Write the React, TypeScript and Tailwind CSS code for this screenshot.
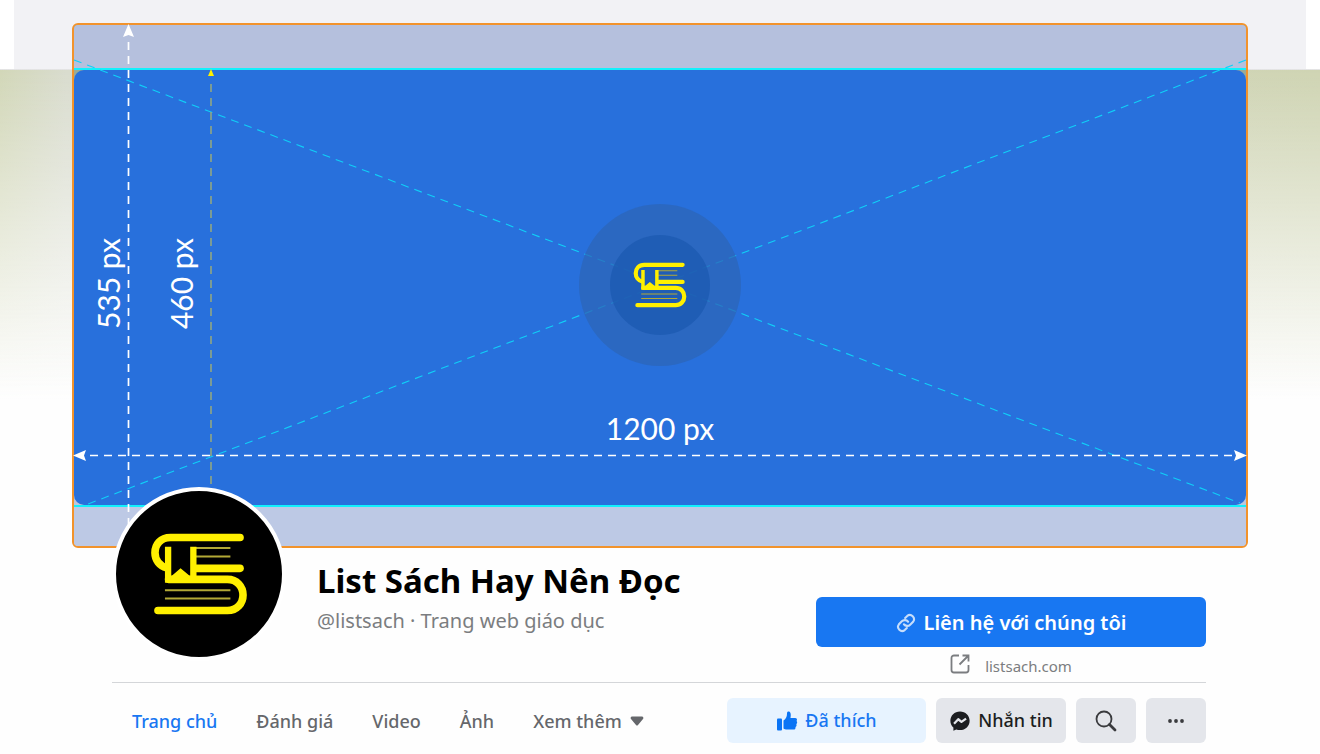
import React from 'react';

const tabs = ['Đánh giá', 'Video', 'Ảnh'];

const BookLogo: React.FC<{ className?: string }> = ({ className }) => (
  <svg viewBox="150 155 295 250" className={className} fill="none" aria-hidden="true">
    <g stroke="#b3a936" strokeWidth="6">
      <path d="M288 202H392M288 227H392M195 329H392M195 354H392" />
    </g>
    <g stroke="#fff000" strokeWidth="23" strokeLinecap="round">
      <path d="M421 170H212C181 170 165 192 165 216C165 238 179 256 200 261" />
      <path d="M421 263H290" />
      <path d="M206 296H383C412 296 430 318 430 343C430 368 412 390 383 390H174" />
    </g>
    <path d="M195 198H214V287L242 263L271 287V198H290V306H195Z" fill="#fff000" />
  </svg>
);

const Messenger = () => (
  <svg viewBox="0 0 24 24" className="w-[22px] h-[22px]" aria-hidden="true">
    <path
      fill="#1c1e21"
      d="M12 1.5C6 1.5 1.5 5.9 1.5 11.7c0 3 1.2 5.700 3.300 7.500v3.300l3.100-1.200c1.300.4 2.700.6 4.100.6 6 0 10.500-4.400 10.500-10.200S18 1.500 12 1.500Z"
    />
    <path d="m5.500 15 4.600-4.900 3.500 2.800 5-3.500" fill="none" stroke="#e4e6eb" strokeWidth="2.500" strokeLinejoin="round" />
  </svg>
);

const Guides = () => (
  <svg
    viewBox="0 0 1176 525"
    preserveAspectRatio="none"
    className="absolute -inset-[2px] w-[calc(100%+4px)] h-[calc(100%+4px)] pointer-events-none"
    fill="none"
    aria-hidden="true"
  >
    <g stroke="#10d0f8" strokeWidth="1.100" strokeDasharray="8 6">
      <path d="M2 37L1168 480" />
      <path d="M1174 37L16 481" />
    </g>
    <g stroke="#fff" strokeDasharray="8 6">
      <path d="M56.500 19V504" strokeWidth="1.700" />
      <path d="M18 432.500H1164" strokeWidth="1.500" />
    </g>
    <path d="M139 61V468" stroke="#96a97c" strokeWidth="1.500" strokeDasharray="8 6" />
    <g fill="#fff">
      <path d="M56.500 1L62 14L56.500 12L51 14Z" />
      <path d="M1 432.500L14 427L12 432.500L14 438Z" />
      <path d="M1175 432.500L1162 427L1164 432.500L1162 438Z" />
    </g>
    <path d="M139 46L142 53H136Z" fill="#fff000" />
  </svg>
);

const Cover: React.FC = () => (
  <section className="relative mx-[72px] border-2 border-[#f2932c] rounded-[6px] bg-linear-to-b from-[#94a890] to-[#bdc9e5] font-['Lato',sans-serif] text-[30px] leading-[40px] text-white">
    <div className="h-[43px] rounded-t-[4px] bg-[#b5c0dd]" />
    <div className="border-y-2 border-[#12f0fc]">
      <div className="h-[435px] rounded-[10px] bg-[#2870dc]" />
    </div>
    <div className="h-[39px] rounded-b-[4px] bg-[#bdc9e5]" />
    <Guides />
    <div className="absolute left-1/2 top-[260px] -translate-x-1/2 -translate-y-1/2 w-[162px] h-[162px] rounded-full bg-[#2c66b8]/75 flex items-center justify-center">
      <div className="w-[100px] h-[100px] rounded-full bg-[#1c59b0]/75 flex items-center justify-center">
        <BookLogo className="w-[54px] h-[46px]" />
      </div>
    </div>
    <span className="absolute left-[14px] top-[213px] [writing-mode:vertical-rl] rotate-180">535 px</span>
    <span className="absolute left-[87px] top-[213px] [writing-mode:vertical-rl] rotate-180">460 px</span>
    <span className="absolute left-1/2 top-[383px] -translate-x-1/2">1200 px</span>
  </section>
);

export default function App() {
  return (
    <div className="relative min-h-screen bg-[#fefefe] font-['Noto_Sans',sans-serif]">
      <div className="absolute inset-x-0 top-0">
        <div className="h-[69px] bg-white px-[14px]">
          <div className="h-full bg-[#f2f2f5]" />
        </div>
        <div className="h-[330px] bg-linear-to-r from-[#d2d7b8] via-[#d9dcce] via-5% to-[#cfd4b3]">
          <div className="h-full border-t border-black/10 bg-linear-to-b from-white/0 via-white/50 to-[#fefefe]" />
        </div>
      </div>

      <main className="relative pt-[23px]">
        <Cover />

        <div className="ml-[112px] mr-[114px]">
          <header className="flex h-[135px] border-b border-[#d4d6d9]">
            <div className="relative -mt-[61px] w-[174px] h-[174px] shrink-0 rounded-full border-4 border-white bg-black flex items-center justify-center">
              <BookLogo className="w-[98px] h-[84px]" />
            </div>
            <div className="ml-[31px] pt-[11px] grow">
              <h1 className="text-[33px] leading-[44px] font-bold text-black whitespace-nowrap">List Sách Hay Nên Đọc</h1>
              <p className="mt-[4px] text-[20px] leading-[28px] text-[#7b7d80]">@listsach · Trang web giáo dục</p>
            </div>
            <div className="w-[390px] pt-[49px] shrink-0">
              <button className="w-full h-[50px] pt-[2px] rounded-[6px] bg-[#1877f2] text-white text-[20px] font-semibold flex items-center justify-center gap-[8px]">
                <svg viewBox="0 0 24 24" className="w-[20px] h-[20px] opacity-75" fill="none" stroke="currentColor" strokeWidth="2.500" strokeLinecap="round" aria-hidden="true">
                  <path d="M9.500 13.500a5 5 0 0 0 7.500.5l3.500-3.500a5 5 0 0 0-7-7L11 6" />
                  <path d="M14.500 10.500a5 5 0 0 0-7.500-.5l-3.500 3.500a5 5 0 0 0 7 7L13 18" />
                </svg>
                Liên hệ với chúng tôi
              </button>
              <a href="#" className="mt-[7px] flex items-center justify-center gap-[15px] text-[15px] leading-[24px] text-[#7b7d80]">
                <svg viewBox="0 0 20 20" className="w-[20px] h-[20px] -mt-[4px]" fill="none" stroke="currentColor" strokeWidth="1.800" aria-hidden="true">
                  <path d="M9 1.500H4A2.500 2.500 0 0 0 1.500 4v12A2.500 2.500 0 0 0 4 18.500h12a2.500 2.500 0 0 0 2.500-2.500v-5M9.500 10.500l8.500-8.500M12.500 1.500h6v6" />
                </svg>
                listsach.com
              </a>
            </div>
          </header>

          <div className="flex items-center justify-between pt-[15px]">
            <nav className="flex items-center gap-[39px] pl-[20px] text-[18px] leading-[24px] font-medium text-[#65676b] whitespace-nowrap">
              <a href="#" className="text-[#1877f2]">Trang chủ</a>
              {tabs.map((tab) => (
                <a key={tab} href="#">{tab}</a>
              ))}
              <button className="flex items-center gap-[8px]">
                Xem thêm
                <svg viewBox="0 0 14 10" className="w-[14px] h-[10px]" aria-hidden="true">
                  <path d="M2 .5h10a1.500 1.500 0 0 1 1 2.500L8 9a1.300 1.300 0 0 1-2 0L1 3A1.500 1.500 0 0 1 2 .5Z" fill="#65676b" />
                </svg>
              </button>
            </nav>
            <div className="flex gap-[10px] text-[18px] font-medium text-[#1c1e21] whitespace-nowrap">
              <button className="w-[199px] h-[45px] rounded-[6px] bg-[#e7f3ff] text-[#1877f2] flex items-center justify-center gap-[7px]">
                <svg viewBox="0 0 22 20" className="w-[22px] h-[20px]" fill="#0a74f5" aria-hidden="true">
                  <rect x="1" y="7.500" width="5" height="12" rx="1" />
                  <path d="M7.500 9.500C10 8 11 5.500 11 2.500 11 1 11.700.5 12.500.5c2 0 2.800 2.500 2 6.500H19c2 0 2.500 1.800 1.500 3 1 .9.900 2.400-.2 3 .6 1.200.2 2.400-.8 2.900.3 1.600-.5 2.600-2 2.600H11c-1.500 0-2.500-.3-3.500-1Z" />
                </svg>
                Đã thích
              </button>
              <button className="w-[130px] h-[45px] rounded-[6px] bg-[#e4e6eb] flex items-center justify-center gap-[7px]">
                <Messenger />
                Nhắn tin
              </button>
              <button aria-label="Tìm kiếm" className="w-[60px] h-[45px] rounded-[6px] bg-[#e4e6eb] flex items-center justify-center">
                <svg viewBox="0 0 22 22" className="w-[22px] h-[22px]" fill="none" stroke="#3a3b3e" aria-hidden="true">
                  <circle cx="9" cy="9" r="7.500" strokeWidth="1.800" />
                  <path d="M14.500 14.500L20 20" strokeWidth="2.800" strokeLinecap="round" />
                </svg>
              </button>
              <button aria-label="Thêm" className="w-[60px] h-[45px] rounded-[6px] bg-[#e4e6eb] flex items-center justify-center">
                <svg viewBox="0 0 16 4" className="w-[16px] h-[4px]" fill="#3a3b3e" aria-hidden="true">
                  <circle cx="2" cy="2" r="1.900" />
                  <circle cx="8" cy="2" r="1.900" />
                  <circle cx="14" cy="2" r="1.900" />
                </svg>
              </button>
            </div>
          </div>
        </div>
      </main>
    </div>
  );
}
